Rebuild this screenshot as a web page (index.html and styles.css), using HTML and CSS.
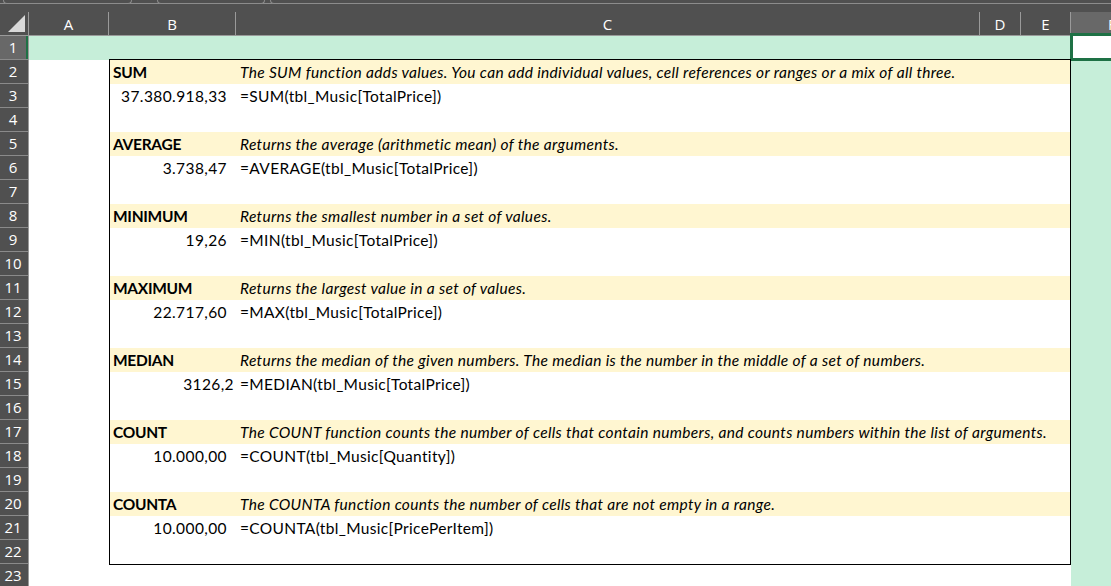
FILE: index.html
```html
<!DOCTYPE html>
<html lang="en">

<head>
  <meta charset="UTF-8">
  <title>Statistical functions</title>
  <link rel="stylesheet" href="styles.css">
</head>

<body>
  <div class="app">
    <div class="topbar">
      <span class="tb-box name"></span>
      <span class="tb-box fx"></span>
      <span class="tb-box formula"></span>
    </div>

    <div class="colheads">
      <div class="corner">
        <svg width="17" height="17" viewBox="0 0 17 17"><polygon points="17,0 17,17 0,17" fill="#d9d9d9" /></svg>
      </div>
      <div class="ch col-a">A</div>
      <div class="ch col-b">B</div>
      <div class="ch col-c">C</div>
      <div class="ch col-d">D</div>
      <div class="ch col-e">E</div>
      <div class="ch col-f active-head">F</div>
    </div>

    <div class="body">
      <div class="rowheads">
        <div class="rh active-row">1</div>
        <div class="rh">2</div>
        <div class="rh">3</div>
        <div class="rh">4</div>
        <div class="rh">5</div>
        <div class="rh">6</div>
        <div class="rh">7</div>
        <div class="rh">8</div>
        <div class="rh">9</div>
        <div class="rh">10</div>
        <div class="rh">11</div>
        <div class="rh">12</div>
        <div class="rh">13</div>
        <div class="rh">14</div>
        <div class="rh">15</div>
        <div class="rh">16</div>
        <div class="rh">17</div>
        <div class="rh">18</div>
        <div class="rh">19</div>
        <div class="rh">20</div>
        <div class="rh">21</div>
        <div class="rh">22</div>
        <div class="rh">23</div>
      </div>

      <div class="sheet">
        <div class="row-one">
          <div class="row-one-fill"></div>
          <div class="active-cell"></div>
        </div>

        <div class="grid-area">
          <div class="col-a-space"></div>

          <div class="card">
            <div class="fn">
              <div class="title-row">
                <div class="b-cell label">SUM</div>
                <div class="c-cell desc">The SUM function adds values. You can add individual values, cell references or ranges or a mix of all three.</div>
              </div>
              <div class="value-row">
                <div class="b-cell num">37.380.918,33</div>
                <div class="c-cell">=SUM(tbl_Music[TotalPrice])</div>
              </div>
              <div class="blank-row"></div>
            </div>

            <div class="fn">
              <div class="title-row">
                <div class="b-cell label">AVERAGE</div>
                <div class="c-cell desc">Returns the average (arithmetic mean) of the arguments.</div>
              </div>
              <div class="value-row">
                <div class="b-cell num">3.738,47</div>
                <div class="c-cell">=AVERAGE(tbl_Music[TotalPrice])</div>
              </div>
              <div class="blank-row"></div>
            </div>

            <div class="fn">
              <div class="title-row">
                <div class="b-cell label">MINIMUM</div>
                <div class="c-cell desc">Returns the smallest number in a set of values.</div>
              </div>
              <div class="value-row">
                <div class="b-cell num">19,26</div>
                <div class="c-cell">=MIN(tbl_Music[TotalPrice])</div>
              </div>
              <div class="blank-row"></div>
            </div>

            <div class="fn">
              <div class="title-row">
                <div class="b-cell label">MAXIMUM</div>
                <div class="c-cell desc">Returns the largest value in a set of values.</div>
              </div>
              <div class="value-row">
                <div class="b-cell num">22.717,60</div>
                <div class="c-cell">=MAX(tbl_Music[TotalPrice])</div>
              </div>
              <div class="blank-row"></div>
            </div>

            <div class="fn">
              <div class="title-row">
                <div class="b-cell label">MEDIAN</div>
                <div class="c-cell desc">Returns the median of the given numbers. The median is the number in the middle of a set of numbers.</div>
              </div>
              <div class="value-row">
                <div class="b-cell num general">3126,2</div>
                <div class="c-cell">=MEDIAN(tbl_Music[TotalPrice])</div>
              </div>
              <div class="blank-row"></div>
            </div>

            <div class="fn">
              <div class="title-row">
                <div class="b-cell label">COUNT</div>
                <div class="c-cell desc">The COUNT function counts the number of cells that contain numbers, and counts numbers within the list of arguments.</div>
              </div>
              <div class="value-row">
                <div class="b-cell num">10.000,00</div>
                <div class="c-cell">=COUNT(tbl_Music[Quantity])</div>
              </div>
              <div class="blank-row"></div>
            </div>

            <div class="fn">
              <div class="title-row">
                <div class="b-cell label">COUNTA</div>
                <div class="c-cell desc">The COUNTA function counts the number of cells that are not empty in a range.</div>
              </div>
              <div class="value-row">
                <div class="b-cell num">10.000,00</div>
                <div class="c-cell">=COUNTA(tbl_Music[PricePerItem])</div>
              </div>
              <div class="blank-row"></div>
            </div>
          </div>

          <div class="col-f-fill"></div>
        </div>
      </div>
    </div>
  </div>
</body>

</html>
```

FILE: styles.css
```css
* {
  margin: 0;
  padding: 0;
  box-sizing: border-box;

  --head-bg: #505050;
  --head-line: #9a9a9a;
  --head-active: #686868;
  --select-green: #c6eed9;
  --excel-green: #1e7145;
  --band: #fff6d1;
}

body {
  width: 1111px;
  height: 586px;
  overflow: hidden;
  background-color: #fff;
  font-family: "Lato", "Liberation Sans", sans-serif;
  color: #000;
}

.app {
  width: 1111px;
}

/* formula bar remains */
.topbar {
  height: 12px;
  background-color: var(--head-bg);
  display: flex;
  align-items: flex-start;
  border-top: 3px solid var(--head-bg);
  position: relative;
}

.topbar::after {
  content: "";
  position: absolute;
  left: 0;
  right: 0;
  top: 0;
  height: 1px;
  background-color: #8c8c8c;
}

.tb-box {
  display: block;
  height: 4px;
  margin-top: -3px;
  border: 1px solid #8c8c8c;
  border-top: none;
  border-radius: 0 0 5px 5px;
  background-color: var(--head-bg);
  position: relative;
  z-index: 1;
}

.tb-box.name {
  margin-left: 3px;
  width: 129px;
}

.tb-box.fx {
  margin-left: 25px;
  width: 108px;
}

.tb-box.formula {
  margin-left: 5px;
  flex: 1;
  margin-right: -6px;
}

/* column headers */
.colheads {
  display: flex;
  height: 24px;
  background-color: var(--head-bg);
  border-bottom: 1px solid var(--head-line);
}

.corner {
  width: 29px;
  border-right: 1px solid var(--head-line);
  display: flex;
  justify-content: flex-end;
  align-items: flex-end;
  padding: 0 3px 3px 0;
}

.corner svg {
  display: block;
}

.ch {
  font-family: "Open Sans", "DejaVu Sans", sans-serif;
  font-size: 15px;
  color: #fff;
  text-align: center;
  line-height: 24px;
  border-right: 1px solid var(--head-line);
}

.col-a { width: 80px; }
.col-b { width: 127px; }
.col-c { width: 744px; }
.col-d { width: 41px; }
.col-e { width: 50px; }
.col-f { width: 40px; border-right: none; }

.active-head {
  background-color: var(--head-active);
  text-align: left;
  text-indent: 37px;
  overflow: hidden;
}

/* body */
.body {
  display: flex;
}

.rowheads {
  width: 29px;
  background-color: var(--head-bg);
  border-right: 1px solid var(--head-line);
}

.rh {
  height: 24px;
  font-family: "Open Sans", "DejaVu Sans", sans-serif;
  font-size: 15px;
  color: #fff;
  line-height: 23px;
  text-align: center;
  padding-right: 2px;
  border-bottom: 1px solid #8a8a8a;
}

.rh.active-row {
  background-color: var(--head-active);
  box-shadow: inset -2px 0 0 var(--excel-green);
}

.sheet {
  width: 1082px;
}

.row-one {
  display: flex;
  height: 24px;
}

.row-one-fill {
  width: 1042px;
  background-color: var(--select-green);
}

.active-cell {
  width: 40px;
  background-color: #fff;
  position: relative;
}

/* selection border sits over the neighbouring cells */
.active-cell::after {
  content: "";
  position: absolute;
  left: -1px;
  top: -3px;
  right: -4px;
  bottom: -1px;
  border: 3px solid var(--excel-green);
}

.grid-area {
  display: flex;
  height: 528px;
}

.col-a-space {
  width: 80px;
}

.card {
  width: 962px;
  height: 506px;
  margin-top: -1px;
  border: 1px solid #000;
  align-self: flex-start;
  position: relative;
}

.col-f-fill {
  width: 40px;
  background-color: var(--select-green);
}

.title-row,
.value-row,
.blank-row {
  height: 24px;
  display: flex;
  font-size: 15.5px;
  line-height: 24px;
  letter-spacing: 0.33px;
  white-space: nowrap;
  font-variant-numeric: tabular-nums;
}

.title-row {
  background-color: var(--band);
}

.b-cell {
  width: 126px;
  flex-shrink: 0;
}

.c-cell {
  padding-left: 4px;
}

.label {
  font-weight: bold;
  letter-spacing: -0.3px;
  padding-left: 3px;
}

.desc {
  font-style: italic;
}

.num {
  text-align: right;
  padding-right: 9px;
  letter-spacing: 0.4px;
}

.num.general {
  padding-right: 2px;
}
```
